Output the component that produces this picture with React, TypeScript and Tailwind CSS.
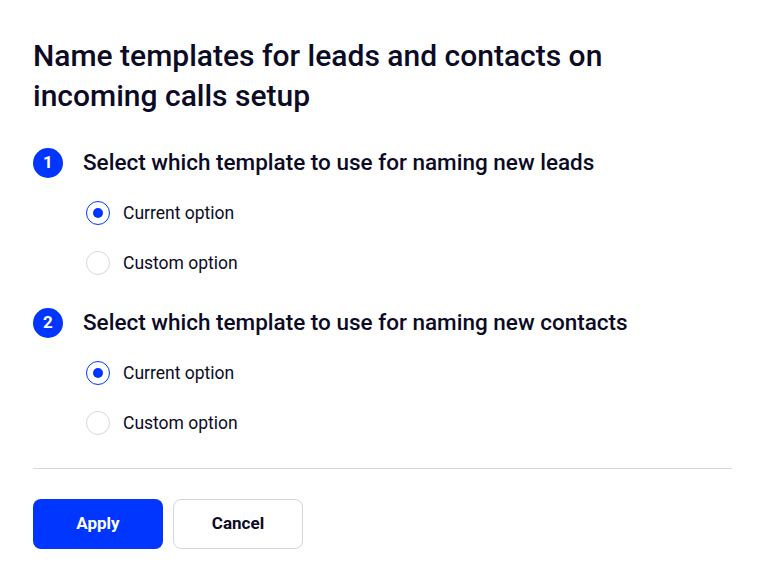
import { useState } from "react";

const steps = [
  { n: 1, title: "Select which template to use for naming new leads" },
  { n: 2, title: "Select which template to use for naming new contacts" },
];

function Radio({ checked }: { checked: boolean }) {
  return (
    <span
      className={`w-6 h-6 rounded-full flex items-center justify-center flex-shrink-0 ${
        checked ? "border-[1.5px] border-[#0036ff]" : "border border-[#d6d6e0]"
      }`}
    >
      {checked && <span className="w-[10px] h-[10px] rounded-full bg-[#0036ff]" />}
    </span>
  );
}

export default function App() {
  const [choice, setChoice] = useState<Record<number, string>>({ 1: "current", 2: "current" });

  return (
    <div
      className="w-[765px] h-[582px] bg-white px-[33px] pt-[36px] text-[#0b0b26]"
      style={{ fontFamily: "Roboto, 'Liberation Sans', sans-serif" }}
    >
      <h1 className="text-[30px] leading-[40px] font-medium max-w-[640px]">
        Name templates for leads and contacts on incoming calls setup
      </h1>

      <div className="mt-[32px] flex flex-col gap-[33px]">
        {steps.map((s) => (
          <div key={s.n}>
            <div className="flex items-center gap-5 h-[30px]">
              <span className="w-[30px] h-[30px] rounded-full bg-[#0036ff] text-white flex items-center justify-center text-[17px] font-bold">
                {s.n}
              </span>
              <span className="text-[22.5px] font-medium">{s.title}</span>
            </div>
            <div className="mt-[23px] ml-[53px] flex flex-col gap-[26px]">
              {[
                { id: "current", label: "Current option" },
                { id: "custom", label: "Custom option" },
              ].map((o) => (
                <label
                  key={o.id}
                  className="flex items-center gap-[13px] h-6 cursor-pointer"
                  onClick={() => setChoice({ ...choice, [s.n]: o.id })}
                >
                  <Radio checked={choice[s.n] === o.id} />
                  <span className="text-[17.5px]">{o.label}</span>
                </label>
              ))}
            </div>
          </div>
        ))}
      </div>

      <div className="mt-[33px] border-t border-[#d9d8e0]" />

      <div className="mt-[30px] flex gap-[10px]">
        <button className="w-[130px] h-[50px] rounded-lg bg-[#0036ff] text-white text-[17px] font-bold">
          Apply
        </button>
        <button className="w-[130px] h-[50px] rounded-lg border border-[#d6d6de] bg-white text-[#0b0b26] text-[17px] font-bold">
          Cancel
        </button>
      </div>
    </div>
  );
}
